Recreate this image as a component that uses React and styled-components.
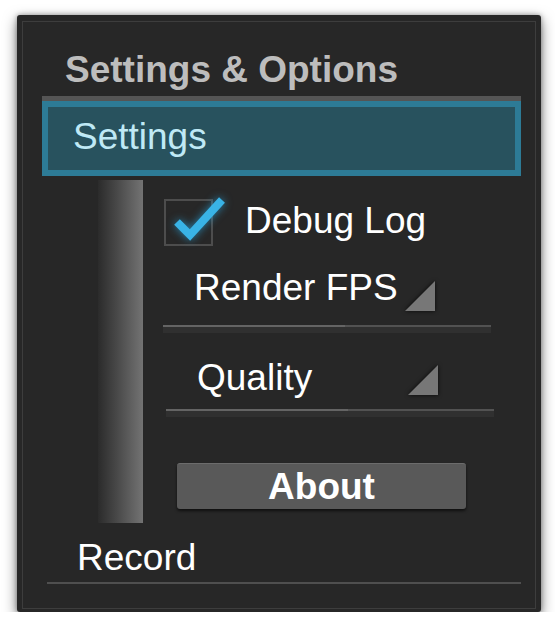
import React from 'react';
import styled, { createGlobalStyle } from 'styled-components';

const GlobalStyle = createGlobalStyle`
  html, body {
    margin: 0;
    background: #fff;
  }
  body {
    font-family: "Liberation Sans", Arial, sans-serif;
  }
`;

const Panel = styled.div`
  margin: 15px 0 0 17px;
  width: 524px;
  box-sizing: border-box;
  padding: 6px 5px 3px 5px;
  background: #272727;
  border-radius: 3px;
  box-shadow: 0 5px 14px rgba(0, 0, 0, 0.5), 0 0 5px rgba(0, 0, 0, 0.35);
`;

const Frame = styled.div`
  display: flex;
  flex-direction: column;
  border: 1px solid #3d3d3d;
  padding-bottom: 24px;
`;

const Title = styled.h1`
  margin: 28px 0 0 42px;
  font-size: 37px;
  font-weight: bold;
  line-height: 40px;
  color: #bdbdbd;
`;

const Header = styled.div`
  margin: 6px 14px 0 19px;
  border-top: 5px solid #555;
`;

const HeaderBox = styled.div`
  border: 6px solid #2d7b96;
  background: #28525e;
  color: #bfe9f5;
  font-size: 37px;
  line-height: 60px;
  padding: 0 0 3px 25px;
`;

const Body = styled.div`
  display: flex;
  margin: 4px 0 0 75px;
`;

const Scrollbar = styled.div`
  width: 45px;
  height: 343px;
  background: linear-gradient(to right, #2b2b2b 0%, #474747 40%, #737373 100%);
`;

const Column = styled.div`
  display: flex;
  flex-direction: column;
  margin-left: 20px;
  padding-top: 19px;
`;

const CheckRow = styled.div`
  display: flex;
  align-items: flex-start;
`;

const Box = styled.div`
  position: relative;
  margin-left: 1px;
  width: 49px;
  height: 47px;
  box-sizing: border-box;
  border: 2px solid #4d4d4d;
`;

const Tick = styled.svg`
  position: absolute;
  left: -12px;
  top: -12px;
  overflow: visible;
  filter: drop-shadow(0 0 4px rgba(40, 170, 230, 0.7));
`;

const Label = styled.span`
  margin-left: ${p => p.$gap || 0}px;
  font-size: 37px;
  line-height: ${p => p.$lh || 40}px;
  color: #fff;
`;

const Select = styled.div`
  width: 328px;
  margin: ${p => p.$top}px 0 0 ${p => p.$left || 0}px;
`;

const SelectRow = styled.div`
  display: flex;
  align-items: flex-end;
  justify-content: space-between;
  padding: 0 56px 0 31px;
`;

const SelectLabel = styled(Label)`
  margin-bottom: ${p => p.$drop}px;
`;

const Arrow = styled.svg`
  margin-bottom: 14px;
  filter: drop-shadow(0 0 2px rgba(0, 0, 0, 0.8));
`;

const Track = styled.div`
  height: 8px;
  border-top: 2px solid #525252;
  box-sizing: border-box;
  background: #303030;
`;

const Fill = styled.div`
  width: ${p => p.$value}%;
  height: 2px;
  margin-top: -2px;
  background: #646464;
`;

const Button = styled.button`
  margin: 46px 0 0 14px;
  width: 289px;
  height: 46px;
  padding: 0;
  border: none;
  border-top: 1px solid #6c6c6c;
  border-radius: 3px;
  background: #595959;
  box-shadow: 0 2px 3px rgba(0, 0, 0, 0.6);
  color: #fff;
  font-family: inherit;
  font-size: 37px;
  font-weight: bold;
  line-height: 44px;
`;

const Record = styled.div`
  margin: 15px 0 0 54px;
  font-size: 37px;
  line-height: 40px;
  color: #fff;
`;

const Rule = styled.div`
  margin: 4px 14px 0 24px;
  height: 2px;
  background: #4f4f4f;
`;

const Dropdown = ({ label, top, left, drop }) => (
  <Select $top={top} $left={left}>
    <SelectRow>
      <SelectLabel $drop={drop}>{label}</SelectLabel>
      <Arrow width="30" height="30" viewBox="0 0 30 30">
        <polygon points="30,0 30,30 0,30" fill="#777" />
      </Arrow>
    </SelectRow>
    <Track>
      <Fill $value={55.5} />
    </Track>
  </Select>
);

const App = () => (
  <>
    <GlobalStyle />
    <Panel>
      <Frame>
        <Title>Settings &amp; Options</Title>
        <Header>
          <HeaderBox>Settings</HeaderBox>
        </Header>
        <Body>
          <Scrollbar />
          <Column>
            <CheckRow>
              <Box>
                <Tick width="80" height="70" viewBox="0 0 80 70">
                  <polyline
                    points="23,33 36,46 68,11"
                    fill="none"
                    stroke="#39b3e6"
                    strokeWidth="8"
                    strokeLinejoin="miter"
                  />
                </Tick>
              </Box>
              <Label $gap={32} $lh={44}>Debug Log</Label>
            </CheckRow>
            <Dropdown label="Render FPS" top={22} drop={17} />
            <Dropdown label="Quality" top={25} left={3} drop={11} />
            <Button>About</Button>
          </Column>
        </Body>
        <Record>Record</Record>
        <Rule />
      </Frame>
    </Panel>
  </>
);

export default App;
